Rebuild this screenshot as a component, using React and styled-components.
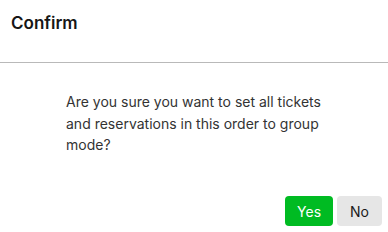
import React from "react";
import styled, { createGlobalStyle } from "styled-components";

const GlobalStyle = createGlobalStyle`
  html, body {
    margin: 0;
    padding: 0;
    background: #ffffff;
    font-family: Inter, "Liberation Sans", sans-serif;
  }
`;

const Dialog = styled.div`
  width: 388px;
  height: 232px;
  background: #fff;
  display: flex;
  flex-direction: column;
`;

const Header = styled.div`
  box-sizing: border-box;
  height: 63px;
  padding: 12px 11px 0;
  border-bottom: 1px solid #b9b9b9;
`;

const Title = styled.h2`
  margin: 0;
  font-size: 17px;
  line-height: 22px;
  font-weight: 600;
  color: #161616;
`;

const Body = styled.div`
  padding: 28px 66px 0 66px;
  font-size: 14px;
  line-height: 21.5px;
  color: #333;
`;

const Footer = styled.div`
  margin-top: auto;
  display: flex;
  justify-content: flex-end;
  gap: 4px;
  padding: 0 6px 6px 0;
`;

const Button = styled.button`
  height: 30px;
  padding: 0 ${(p) => (p.$primary ? "12px" : "13px")};
  border: none;
  border-radius: 4px;
  font-family: Inter, "Liberation Sans", sans-serif;
  font-size: 14px;
  background: ${(p) => (p.$primary ? "#00bb22" : "#e6e6e6")};
  color: ${(p) => (p.$primary ? "#ffffff" : "#1a1a1a")};
  cursor: pointer;
`;

export default function App() {
  return (
    <>
      <GlobalStyle />
      <Dialog>
        <Header>
          <Title>Confirm</Title>
        </Header>
        <Body>
          Are you sure you want to set all tickets and reservations in this
          order to group mode?
        </Body>
        <Footer>
          <Button $primary>Yes</Button>
          <Button>No</Button>
        </Footer>
      </Dialog>
    </>
  );
}
